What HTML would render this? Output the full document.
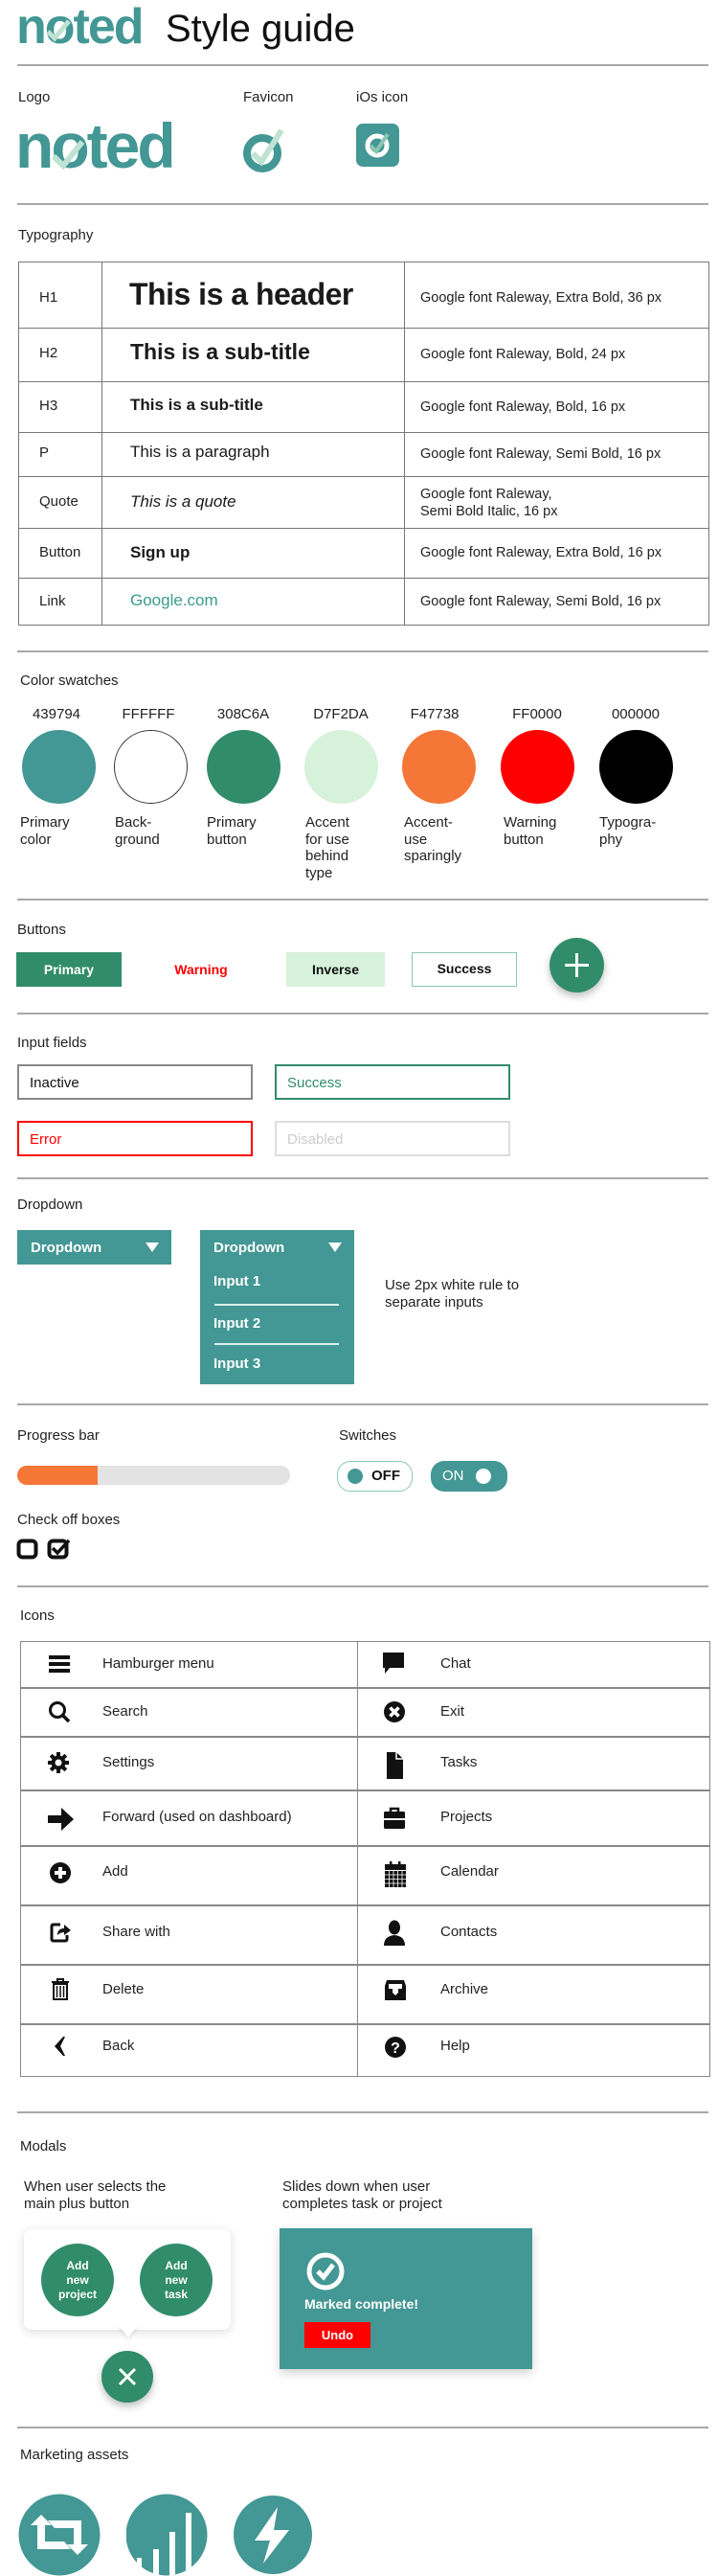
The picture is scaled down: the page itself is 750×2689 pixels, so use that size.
<!DOCTYPE html>
<html><head><meta charset="utf-8">
<style>
*{margin:0;padding:0;box-sizing:border-box}
body{width:750px;height:2689px;position:relative;background:#fff;font-family:"Liberation Sans",sans-serif;color:#222;overflow:hidden}
.a{position:absolute}
.hr{position:absolute;left:18px;width:722px;height:2px;background:#a8a8a8}
.lbl{position:absolute;font-size:15px;line-height:18px;color:#222}
.logo{position:absolute;color:#439794;font-weight:bold;font-family:"Liberation Sans",sans-serif}
.cell{position:absolute;border:1px solid #777}
.tl{position:absolute;font-size:15px;line-height:18px}
.sw{position:absolute;top:762px;width:77px;height:77px;border-radius:50%}
.hex{position:absolute;top:737px;font-size:15px;width:90px;text-align:center}
.swd{position:absolute;top:850px;font-size:15px;line-height:17.6px}
.btn{position:absolute;top:994px;height:36px;font-size:14px;font-weight:bold;text-align:center;line-height:36px}
.inp{position:absolute;width:246px;height:37px;font-size:15px;line-height:35px;padding-left:11px}
.dd{position:absolute;background:#439794;color:#fff;font-size:15px;font-weight:bold}
.ic{position:absolute;width:24px;height:24px}
</style></head><body>

<!-- header -->
<div class="logo" style="left:17px;top:-2px;font-size:52px;letter-spacing:-2px">noted</div>
<svg class="a" style="left:46px;top:18px" width="30" height="28"><path d="M4 15 L11 22 L26 4" stroke="#bfe3d3" stroke-width="5" fill="none"/></svg>
<div class="a" style="left:173px;top:8px;font-size:40px;color:#111;">Style guide</div>
<div class="hr" style="top:67px"></div>

<div class="lbl" style="left:19px;top:93px">Logo</div>
<div class="lbl" style="left:254px;top:93px">Favicon</div>
<div class="lbl" style="left:372px;top:93px">iOs icon</div>

<div class="logo" style="left:16px;top:114px;font-size:66px;letter-spacing:-3px">noted</div>
<svg class="a" style="left:52px;top:142px" width="38" height="38"><path d="M4 21 L14 31 L34 6" stroke="#bfe3d3" stroke-width="6" fill="none"/></svg>

<svg class="a" style="left:254px;top:130px" width="46" height="52">
<circle cx="20" cy="30" r="16" stroke="#439794" stroke-width="8" fill="none"/>
<path d="M10 30 L19 39 L40 6" stroke="#bfe3d3" stroke-width="6" fill="none"/></svg>

<svg class="a" style="left:372px;top:129px" width="46" height="46">
<rect x="0" y="0" width="45" height="45" rx="7" fill="#439794"/>
<circle cx="22" cy="23" r="10" stroke="#fff" stroke-width="5" fill="none"/>
<path d="M15 23 L21 29 L33 11" stroke="#8cc6b4" stroke-width="4" fill="none"/></svg>

<div class="hr" style="top:212px"></div>
<div class="lbl" style="left:19px;top:237px">Typography</div>

<!-- typography table -->
<div class="cell" style="left:19px;top:273px;width:722px;height:380px;border-width:1.5px"></div>
<div class="a" style="left:106px;top:273px;width:1px;height:380px;background:#777"></div>
<div class="a" style="left:422px;top:273px;width:1px;height:380px;background:#777"></div>
<div class="a" style="left:19px;top:342px;width:722px;height:1px;background:#777"></div>
<div class="a" style="left:19px;top:398px;width:722px;height:1px;background:#777"></div>
<div class="a" style="left:19px;top:451px;width:722px;height:1px;background:#777"></div>
<div class="a" style="left:19px;top:497px;width:722px;height:1px;background:#777"></div>
<div class="a" style="left:19px;top:551px;width:722px;height:1px;background:#777"></div>
<div class="a" style="left:19px;top:603px;width:722px;height:1px;background:#777"></div>

<div class="tl" style="left:41px;top:302px">H1</div>
<div class="tl" style="left:41px;top:360px">H2</div>
<div class="tl" style="left:41px;top:415px">H3</div>
<div class="tl" style="left:41px;top:464px">P</div>
<div class="tl" style="left:41px;top:515px">Quote</div>
<div class="tl" style="left:41px;top:568px">Button</div>
<div class="tl" style="left:41px;top:619px">Link</div>

<div class="a" style="left:135px;top:289px;font-size:32px;font-weight:bold;color:#1a1a1a;letter-spacing:-0.5px">This is a header</div>
<div class="a" style="left:136px;top:354px;font-size:23px;font-weight:bold;color:#1a1a1a">This is a sub-title</div>
<div class="a" style="left:136px;top:413px;font-size:17px;font-weight:bold;color:#1a1a1a">This is a sub-title</div>
<div class="a" style="left:136px;top:462px;font-size:17px;color:#1a1a1a">This is a paragraph</div>
<div class="a" style="left:136px;top:514px;font-size:17px;font-style:italic;color:#1a1a1a">This is a quote</div>
<div class="a" style="left:136px;top:567px;font-size:17px;font-weight:bold;color:#1a1a1a">Sign up</div>
<div class="a" style="left:136px;top:617px;font-size:17px;color:#3a9a8e">Google.com</div>

<div class="tl" style="left:439px;top:302px;font-size:14.5px">Google font Raleway, Extra Bold, 36 px</div>
<div class="tl" style="left:439px;top:361px;font-size:14.5px">Google font Raleway, Bold, 24 px</div>
<div class="tl" style="left:439px;top:416px;font-size:14.5px">Google font Raleway, Bold, 16 px</div>
<div class="tl" style="left:439px;top:465px;font-size:14.5px">Google font Raleway, Semi Bold, 16 px</div>
<div class="tl" style="left:439px;top:507px;font-size:14.5px">Google font Raleway,<br>Semi Bold Italic, 16 px</div>
<div class="tl" style="left:439px;top:568px;font-size:14.5px">Google font Raleway, Extra Bold, 16 px</div>
<div class="tl" style="left:439px;top:619px;font-size:14.5px">Google font Raleway, Semi Bold, 16 px</div>

<div class="hr" style="top:679px"></div>
<div class="lbl" style="left:21px;top:702px">Color swatches</div>

<div class="hex" style="left:14px">439794</div>
<div class="hex" style="left:110px">FFFFFF</div>
<div class="hex" style="left:209px">308C6A</div>
<div class="hex" style="left:311px">D7F2DA</div>
<div class="hex" style="left:409px">F47738</div>
<div class="hex" style="left:516px">FF0000</div>
<div class="hex" style="left:619px">000000</div>

<div class="sw" style="left:23px;background:#439794"></div>
<div class="sw" style="left:119px;border:1px solid #333"></div>
<div class="sw" style="left:216px;background:#308C6A"></div>
<div class="sw" style="left:318px;background:#D7F2DA"></div>
<div class="sw" style="left:420px;background:#F47738"></div>
<div class="sw" style="left:523px;background:#FF0000"></div>
<div class="sw" style="left:626px;background:#000"></div>

<div class="swd" style="left:21px">Primary<br>color</div>
<div class="swd" style="left:120px">Back-<br>ground</div>
<div class="swd" style="left:216px">Primary<br>button</div>
<div class="swd" style="left:319px">Accent<br>for use<br>behind<br>type</div>
<div class="swd" style="left:422px">Accent-<br>use<br>sparingly</div>
<div class="swd" style="left:526px">Warning<br>button</div>
<div class="swd" style="left:626px">Typogra-<br>phy</div>

<div class="hr" style="top:938px"></div>
<div class="lbl" style="left:18px;top:962px">Buttons</div>
<div class="btn" style="left:17px;width:110px;background:#308C6A;color:#fff">Primary</div>
<div class="btn" style="left:160px;width:100px;color:#f00">Warning</div>
<div class="btn" style="left:299px;width:103px;background:#D7F2DA;color:#111">Inverse</div>
<div class="btn" style="left:430px;width:110px;border:1.5px solid #8cc6b4;line-height:33px;color:#111">Success</div>
<div class="a" style="left:574px;top:979px;width:57px;height:57px;border-radius:50%;background:#308C6A;box-shadow:0 4px 8px rgba(0,0,0,.25)"></div>
<svg class="a" style="left:574px;top:979px" width="57" height="57"><path d="M28.5 16 V41 M16 28.5 H41" stroke="#fff" stroke-width="3"/></svg>

<div class="hr" style="top:1057px"></div>
<div class="lbl" style="left:18px;top:1080px">Input fields</div>
<div class="inp" style="left:18px;top:1111px;border:2px solid #888;color:#111">Inactive</div>
<div class="inp" style="left:287px;top:1111px;border:2px solid #308C6A;color:#308C6A">Success</div>
<div class="inp" style="left:18px;top:1170px;border:2px solid #f00;color:#f00">Error</div>
<div class="inp" style="left:287px;top:1170px;border:2px solid #ddd;color:#ccc">Disabled</div>

<div class="hr" style="top:1229px"></div>
<div class="lbl" style="left:18px;top:1249px">Dropdown</div>
<div class="dd" style="left:18px;top:1284px;width:161px;height:36px;padding:10px 0 0 14px">Dropdown</div>
<svg class="a" style="left:152px;top:1297px" width="14" height="10"><path d="M0 0 H14 L7 10 Z" fill="#fff"/></svg>
<div class="dd" style="left:209px;top:1284px;width:161px;height:161px"></div>
<div class="a" style="left:223px;top:1294px;color:#fff;font-size:15px;font-weight:bold">Dropdown</div>
<svg class="a" style="left:343px;top:1297px" width="14" height="10"><path d="M0 0 H14 L7 10 Z" fill="#fff"/></svg>
<div class="a" style="left:223px;top:1329px;color:#fff;font-size:15px;font-weight:bold">Input 1</div>
<div class="a" style="left:224px;top:1361px;width:130px;height:2px;background:#d7f2ea"></div>
<div class="a" style="left:223px;top:1373px;color:#fff;font-size:15px;font-weight:bold">Input 2</div>
<div class="a" style="left:224px;top:1402px;width:130px;height:2px;background:#d7f2ea"></div>
<div class="a" style="left:223px;top:1415px;color:#fff;font-size:15px;font-weight:bold">Input 3</div>
<div class="lbl" style="left:402px;top:1333px;line-height:18px">Use 2px white rule to<br>separate inputs</div>

<div class="hr" style="top:1465px"></div>
<div class="lbl" style="left:18px;top:1490px">Progress bar</div>
<div class="lbl" style="left:354px;top:1490px">Switches</div>
<div class="a" style="left:18px;top:1530px;width:285px;height:20px;border-radius:10px;background:#e3e3e3;overflow:hidden"><div style="width:84px;height:20px;background:#F47738"></div></div>
<div class="a" style="left:352px;top:1525px;width:79px;height:32px;border-radius:14px;border:1.5px solid #8cc6b4"></div>
<div class="a" style="left:363px;top:1533px;width:16px;height:16px;border-radius:50%;background:#439794"></div>
<div class="a" style="left:388px;top:1532px;font-size:15px;font-weight:bold;color:#111">OFF</div>
<div class="a" style="left:450px;top:1525px;width:80px;height:32px;border-radius:14px;background:#439794"></div>
<div class="a" style="left:462px;top:1532px;font-size:15px;color:#fff">ON</div>
<div class="a" style="left:497px;top:1533px;width:16px;height:16px;border-radius:50%;background:#fff"></div>

<div class="lbl" style="left:18px;top:1578px">Check off boxes</div>
<svg class="a" style="left:17px;top:1606px" width="60" height="24">
<rect x="2.5" y="2.5" width="18" height="17" rx="4" stroke="#111" stroke-width="4" fill="none"/>
<rect x="34.5" y="2.5" width="18" height="17" rx="4" stroke="#111" stroke-width="4" fill="none"/>
<path d="M38 10 L43 15 L55 2" stroke="#111" stroke-width="3.5" fill="none"/></svg>

<div class="hr" style="top:1655px"></div>
<div class="lbl" style="left:21px;top:1678px">Icons</div>

<!-- icons table -->
<div class="cell" style="left:21px;top:1713px;width:721px;height:455px;border-width:1.5px;border-color:#888"></div>
<div class="a" style="left:373px;top:1713px;width:1px;height:455px;background:#888"></div>
<div class="a" style="left:21px;top:1761px;width:721px;height:1.5px;background:#888"></div>
<div class="a" style="left:21px;top:1812px;width:721px;height:1.5px;background:#888"></div>
<div class="a" style="left:21px;top:1868px;width:721px;height:1.5px;background:#888"></div>
<div class="a" style="left:21px;top:1926px;width:721px;height:1.5px;background:#888"></div>
<div class="a" style="left:21px;top:1988px;width:721px;height:1.5px;background:#888"></div>
<div class="a" style="left:21px;top:2050px;width:721px;height:1.5px;background:#888"></div>
<div class="a" style="left:21px;top:2112px;width:721px;height:1.5px;background:#888"></div>

<div class="lbl" style="left:107px;top:1728px">Hamburger menu</div>
<div class="lbl" style="left:107px;top:1778px">Search</div>
<div class="lbl" style="left:107px;top:1831px">Settings</div>
<div class="lbl" style="left:107px;top:1888px">Forward (used on dashboard)</div>
<div class="lbl" style="left:107px;top:1945px">Add</div>
<div class="lbl" style="left:107px;top:2008px">Share with</div>
<div class="lbl" style="left:107px;top:2068px">Delete</div>
<div class="lbl" style="left:107px;top:2127px">Back</div>
<div class="lbl" style="left:460px;top:1728px">Chat</div>
<div class="lbl" style="left:460px;top:1778px">Exit</div>
<div class="lbl" style="left:460px;top:1831px">Tasks</div>
<div class="lbl" style="left:460px;top:1888px">Projects</div>
<div class="lbl" style="left:460px;top:1945px">Calendar</div>
<div class="lbl" style="left:460px;top:2008px">Contacts</div>
<div class="lbl" style="left:460px;top:2068px">Archive</div>
<div class="lbl" style="left:460px;top:2127px">Help</div>

<!-- left icons -->
<svg class="ic" style="left:50px;top:1725px"><rect x="1" y="3" width="22" height="4" fill="#111"/><rect x="1" y="10" width="22" height="4" fill="#111"/><rect x="1" y="17" width="22" height="4" fill="#111"/></svg>
<svg class="ic" style="left:50px;top:1775px"><circle cx="10" cy="10" r="7.5" stroke="#111" stroke-width="3" fill="none"/><path d="M15 15 L22 22" stroke="#111" stroke-width="3.5"/></svg>
<svg class="ic" style="left:49px;top:1828px"><g fill="#111"><circle cx="12" cy="12" r="7.5"/><rect x="10" y="1" width="4" height="22"/><rect x="1" y="10" width="22" height="4"/><rect x="10" y="1" width="4" height="22" transform="rotate(45 12 12)"/><rect x="10" y="1" width="4" height="22" transform="rotate(-45 12 12)"/></g><circle cx="12" cy="12" r="3.5" fill="#fff"/></svg>
<svg class="ic" style="left:49px;top:1884px;width:30px;height:30px"><path d="M1 11 H15 V3 L28 15 L15 27 V19 H1 Z" fill="#111"/></svg>
<svg class="ic" style="left:51px;top:1943px"><circle cx="12" cy="12" r="11" fill="#111"/><path d="M12 6 V18 M6 12 H18" stroke="#fff" stroke-width="4"/></svg>
<svg class="ic" style="left:51px;top:2005px"><path d="M12 4 H5 Q3 4 3 6 V19 Q3 21 5 21 H17 Q19 21 19 19 V15" stroke="#111" stroke-width="3" fill="none"/><path d="M9 15 Q9 8 16 8 V4 L23 10 L16 15 V12 Q12 12 9 15Z" fill="#111"/></svg>
<svg class="ic" style="left:52px;top:2064px"><path d="M2 5 H20 M8 5 V2 H14 V5" stroke="#111" stroke-width="2" fill="none"/><path d="M4 7 H18 V23 H4 Z" stroke="#111" stroke-width="2" fill="none"/><path d="M7.5 9 V21 M11 9 V21 M14.5 9 V21" stroke="#111" stroke-width="1.5"/></svg>
<svg class="ic" style="left:52px;top:2124px"><path d="M14 2 L5 12 L14 22 L16 22 L11 12 L16 2 Z" fill="#111"/></svg>

<!-- right icons -->
<svg class="ic" style="left:399px;top:1723px"><path d="M1 2 H23 V18 H8 L3 24 V18 H1 Z" fill="#111"/></svg>
<svg class="ic" style="left:400px;top:1775px"><circle cx="12" cy="12" r="11" fill="#111"/><path d="M7.5 7.5 L16.5 16.5 M16.5 7.5 L7.5 16.5" stroke="#fff" stroke-width="3.5"/></svg>
<svg class="ic" style="left:402px;top:1827px;height:30px"><path d="M2 2 H12 L19 9 V30 H2 Z" fill="#111"/><path d="M12 2 V9 H19" stroke="#fff" stroke-width="1.5" fill="none"/></svg>
<svg class="ic" style="left:400px;top:1886px"><path d="M8 5 V2 H16 V5" stroke="#111" stroke-width="2.5" fill="none"/><rect x="1" y="5" width="22" height="18" rx="1.5" fill="#111"/><rect x="1" y="12" width="22" height="2" fill="#fff"/></svg>
<svg class="ic" style="left:401px;top:1943px;height:28px"><rect x="6" y="0" width="2.5" height="5" fill="#111"/><rect x="15" y="0" width="2.5" height="5" fill="#111"/><rect x="1" y="3" width="22" height="6" fill="#111"/><rect x="1" y="10" width="22" height="17" fill="#111"/><path d="M1 14 H23 M1 18.5 H23 M1 23 H23 M5.5 10 V27 M10 10 V27 M14.5 10 V27 M19 10 V27" stroke="#fff" stroke-width="0.8"/></svg>
<svg class="ic" style="left:400px;top:2004px;height:28px"><ellipse cx="12" cy="8" rx="6" ry="7.5" fill="#111"/><path d="M1 27 Q1 17 12 16 Q23 17 23 27 Z" fill="#111"/></svg>
<svg class="ic" style="left:401px;top:2065px"><path d="M3 2 H21 L23 8 V23 H1 V8 Z" fill="#111"/><path d="M5 6 H19 V11 H15 V15 L12 18 L9 15 V11 H5 Z" fill="#fff"/></svg>
<svg class="ic" style="left:401px;top:2125px"><circle cx="12" cy="12" r="11" fill="#111"/><text x="12" y="18" text-anchor="middle" font-family="Liberation Sans" font-weight="bold" font-size="16" fill="#fff">?</text></svg>

<div class="hr" style="top:2204px"></div>
<div class="lbl" style="left:21px;top:2232px">Modals</div>
<div class="lbl" style="left:25px;top:2274px;line-height:17.5px">When user selects the<br>main plus button</div>
<div class="lbl" style="left:295px;top:2274px;line-height:17.5px">Slides down when user<br>completes task or project</div>

<div class="a" style="left:25px;top:2327px;width:216px;height:105px;border-radius:8px;background:#fff;box-shadow:0 2px 10px rgba(0,0,0,.15)"></div>
<div class="a" style="left:123px;top:2426px;width:0;height:0;border-left:11px solid transparent;border-right:11px solid transparent;border-top:14px solid #fff;filter:drop-shadow(0 3px 2px rgba(0,0,0,.08))"></div>
<div class="a" style="left:43px;top:2342px;width:76px;height:76px;border-radius:50%;background:#308C6A;color:#fff;font-size:12px;font-weight:bold;text-align:center;line-height:15px;padding-top:16px">Add<br>new<br>project</div>
<div class="a" style="left:146px;top:2342px;width:76px;height:76px;border-radius:50%;background:#308C6A;color:#fff;font-size:12px;font-weight:bold;text-align:center;line-height:15px;padding-top:16px">Add<br>new<br>task</div>
<div class="a" style="left:106px;top:2454px;width:54px;height:54px;border-radius:50%;background:#308C6A;box-shadow:0 4px 8px rgba(0,0,0,.25)"></div>
<svg class="a" style="left:106px;top:2454px" width="54" height="54"><path d="M19 19 L35 35 M35 19 L19 35" stroke="#fff" stroke-width="3"/></svg>

<div class="a" style="left:292px;top:2326px;width:264px;height:147px;background:#439794;box-shadow:0 4px 10px rgba(0,0,0,.18)"></div>
<svg class="a" style="left:319px;top:2350px" width="44" height="44"><circle cx="21" cy="21" r="17" stroke="#fff" stroke-width="5" fill="none"/><path d="M13 21 L19 27 L29 14" stroke="#fff" stroke-width="5" fill="none"/></svg>
<div class="a" style="left:318px;top:2397px;color:#fff;font-size:14px;font-weight:bold">Marked complete!</div>
<div class="a" style="left:318px;top:2424px;width:69px;height:27px;background:#f00;color:#fff;font-size:13px;font-weight:bold;text-align:center;line-height:27px">Undo</div>

<div class="hr" style="top:2533px"></div>
<div class="lbl" style="left:21px;top:2554px">Marketing assets</div>

<svg class="a" style="left:19px;top:2603px" width="86" height="86"><circle cx="43" cy="43" r="42.5" fill="#439794"/>
<path d="M13 33 L24 22 L35 33 H28 V50 H48 L55 58 H20 V33 Z" fill="#fff"/><path d="M73 53 L62 64 L51 53 H58 V36 H38 L31 28 H66 V53 Z" fill="#fff"/></svg>
<svg class="a" style="left:132px;top:2603px" width="86" height="86"><circle cx="42" cy="43" r="42.5" fill="#439794"/>
<rect x="11" y="67" width="5" height="19" fill="#fff"/><rect x="28" y="58" width="6" height="28" fill="#fff"/><rect x="45" y="40" width="6" height="46" fill="#fff"/><rect x="62" y="20" width="6" height="66" fill="#fff"/></svg>
<svg class="a" style="left:244px;top:2605px" width="84" height="84"><circle cx="41" cy="41" r="41" fill="#439794"/>
<path d="M46 12 L22 47 H38 L31 71 L58 36 H42 Z" fill="#fff"/></svg>

</body></html>
